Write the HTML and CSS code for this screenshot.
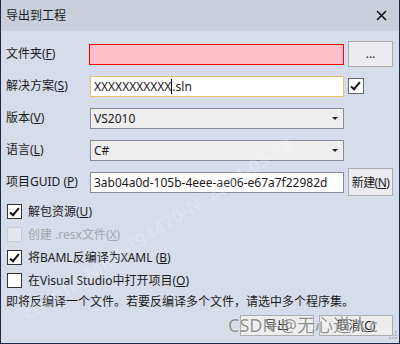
FILE: index.html
```html
<!DOCTYPE html>
<html lang="zh-CN">
<head>
    <meta charset="UTF-8">
    <title>导出到工程</title>
    <link rel="stylesheet" href="styles.css">
</head>
<body>
    <div class="dialog">
        <div class="titlebar">
            <span class="title">导出到工程</span>
            <span class="close">
                <svg width="11" height="11" viewBox="0 0 11 11"><path d="M1 1 L10 10 M10 1 L1 10" stroke="#111" stroke-width="1.6"/></svg>
            </span>
        </div>

        <div class="content">
            <div class="form">
                <label>文件夹(<u>F</u>)</label>
                <div class="field error"></div>
                <button class="btn browse">...</button>

                <label>解决方案(<u>S</u>)</label>
                <div class="field active">XXXXXXXXXXX<span class="caret"></span>.sln</div>
                <span class="check checked small-box"></span>

                <label>版本(<u>V</u>)</label>
                <div class="field combo">VS2010<span class="arrow"></span></div>
                <span></span>

                <label>语言(<u>L</u>)</label>
                <div class="field combo">C#<span class="arrow"></span></div>
                <span></span>

                <label>项目GUID (<u>P</u>)</label>
                <div class="field">3ab04a0d-105b-4eee-ae06-e67a7f22982d</div>
                <button class="btn create"><span>新建(<u>N</u>)</span></button>
            </div>

            <div class="options">
                <div class="option"><span class="check checked"></span><span>解包资源(<u>U</u>)</span></div>
                <div class="option disabled"><span class="check"></span><span>创建 .resx文件(<u>X</u>)</span></div>
                <div class="option"><span class="check checked"></span><span>将BAML反编译为XAML (<u>B</u>)</span></div>
                <div class="option"><span class="check"></span><span>在Visual Studio中打开项目(<u>O</u>)</span></div>
            </div>

            <p class="info">即将反编译一个文件。若要反编译多个文件，请选中多个程序集。</p>

            <div class="actions">
                <button class="btn action">导出</button>
                <button class="btn action">取消(<u>C</u>)</button>
            </div>
        </div>

        <!-- 水印 -->
        <div class="mark">chenhz-MME-I94470-N&nbsp;&nbsp;2024-03-18</div>
        <div class="csdn">CSDN @无心道人c</div>

        <svg class="grip" width="10" height="10" viewBox="0 0 10 10">
            <rect x="8" y="0" width="2" height="2" fill="#b7bcc6"/>
            <rect x="5" y="3" width="2" height="2" fill="#b7bcc6"/>
            <rect x="8" y="3" width="2" height="2" fill="#b7bcc6"/>
            <rect x="2" y="6" width="2" height="2" fill="#b7bcc6"/>
            <rect x="5" y="6" width="2" height="2" fill="#b7bcc6"/>
            <rect x="8" y="6" width="2" height="2" fill="#b7bcc6"/>
        </svg>
    </div>
</body>
</html>
```

FILE: styles.css
```css
body {
    margin: 0;
    padding: 0;
    font-family: "Noto Sans", "Noto Sans CJK SC", sans-serif;
    font-size: 12px;
    color: #1a1a1a;
}
.dialog {
    position: relative;
    width: 400px;
    height: 344px;
    box-sizing: border-box;
    background: #d6dce9;
    border: 1px solid #1b2a46;
    border-top: none;
    overflow: hidden;
}
.titlebar {
    height: 31px;
    background: #c9d0dc;
    display: flex;
    align-items: center;
    justify-content: space-between;
    padding: 0 12px 0 5px;
}
.title {
    line-height: 16px;
}
.close {
    display: flex;
}
.content {
    padding: 8px 6px 0 5px;
}
.form {
    display: grid;
    grid-template-columns: 83px 259px 45px;
    grid-template-rows: repeat(5, 30px);
    row-gap: 2px;
    align-items: center;
}
label {
    line-height: 16px;
    white-space: nowrap;
}
.field {
    position: relative;
    height: 21px;
    box-sizing: border-box;
    border: 1px solid #858c99;
    background: #fff;
    padding: 0 3px;
    line-height: 19px;
    white-space: nowrap;
    overflow: hidden;
    margin-left: 1px;
    width: 254px;
}
.field.error {
    margin-left: 0;
    width: 255px;
    background: #ffc0cb;
    border: 1px solid #ff0000;
}
.field.active {
    border-color: #e4c36a;
}
.field.combo {
    background: #eeeeee;
}
.caret {
    display: inline-block;
    width: 1px;
    height: 15px;
    background: #000;
    vertical-align: -3px;
}
.arrow {
    position: absolute;
    right: 5px;
    top: 8px;
    border-left: 3px solid transparent;
    border-right: 3px solid transparent;
    border-top: 3px solid #222;
}
.btn {
    font-family: inherit;
    font-size: 12px;
    color: #1a1a1a;
    background: #ececf0;
    border: 1px solid #acacac;
    padding: 0;
    cursor: pointer;
}
.browse {
    height: 26px;
    line-height: 14px;
}
.create {
    height: 28px;
    display: flex;
    align-items: center;
    justify-content: center;
    white-space: nowrap;
    letter-spacing: -0.6px;
}
.check {
    display: inline-block;
    position: relative;
    width: 15px;
    height: 15px;
    box-sizing: border-box;
    border: 1px solid #333;
    background: #fff;
    flex: none;
}
.check.checked::after {
    content: "";
    position: absolute;
    left: 4px;
    top: 1px;
    width: 3px;
    height: 8px;
    border-right: 2px solid #111;
    border-bottom: 2px solid #111;
    transform: rotate(40deg);
}
.small-box {
    width: 16px;
    height: 16px;
    border-color: #666;
}
.options {
    margin-top: 3px;
    padding-left: 1px;
}
.option {
    height: 23px;
    display: flex;
    align-items: center;
    gap: 6px;
    line-height: 16px;
}
.option.disabled {
    color: #a3a6ac;
}
.option.disabled .check {
    border-color: #c9ccd2;
    background: #e4e7ee;
}
.info {
    margin: 0;
    height: 20px;
    line-height: 20px;
    white-space: nowrap;
}
.actions {
    margin-top: 3px;
    display: flex;
    justify-content: flex-end;
    gap: 5px;
}
.action {
    width: 74px;
    height: 21px;
    line-height: 17px;
    background: #ededee;
}
.grip {
    position: absolute;
    right: 2px;
    bottom: 2px;
}
.mark {
    position: absolute;
    left: 30px;
    top: 300px;
    color: rgba(255, 255, 255, 0.2);
    font-size: 19px;
    font-weight: bold;
    white-space: nowrap;
    transform: rotate(-33deg);
    transform-origin: left bottom;
    pointer-events: none;
}
.csdn {
    position: absolute;
    left: 227px;
    top: 313px;
    font-size: 18px;
    line-height: 24px;
    color: rgba(110, 110, 110, 0.75);
    text-shadow: 0 0 2px rgba(255, 255, 255, 0.9);
    white-space: nowrap;
    pointer-events: none;
}
```
